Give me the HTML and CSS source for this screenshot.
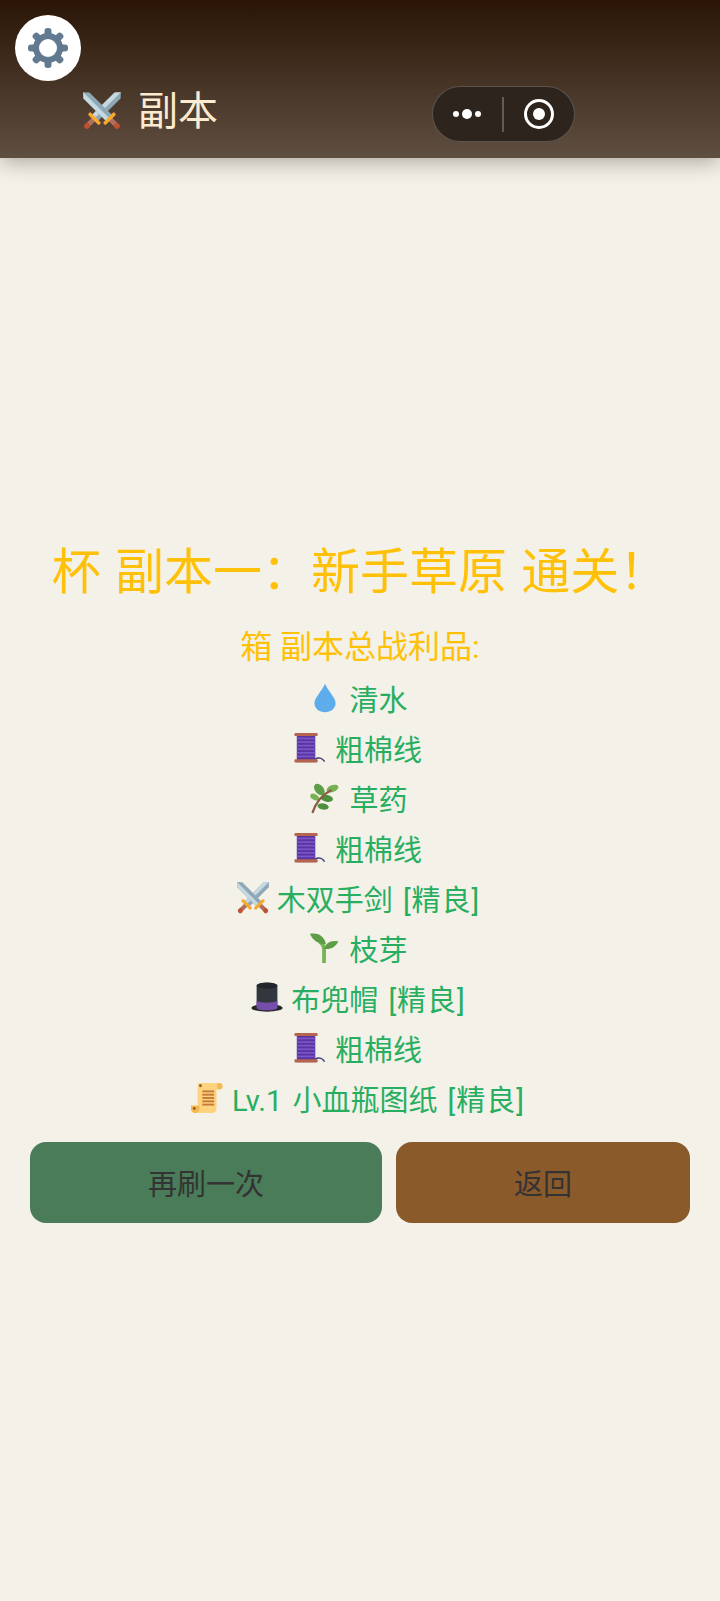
FILE: index.html
```html
<!DOCTYPE html>
<html lang="zh">

<head>
    <title>副本</title>
    <meta charset="UTF-8">
    <meta name="viewport" content="width=720, user-scalable=no">
    <link rel="stylesheet" href="styles.css">
</head>

<body>
    <svg class="sprites" aria-hidden="true">
        <symbol id="sword" viewBox="0 0 36 36" overflow="visible">
            <path fill="#8fa8b8" d="M18-6l3.800 4.200V27h-7.600V-1.800z"/>
            <path fill="#c6d8e0" d="M18-6v33h-3.800V-1.800z"/>
            <rect x="15.800" y="27" width="4.400" height="9" fill="#b0705f"/>
            <rect x="11" y="26" width="14" height="3.200" rx="1.400" fill="#f7a92e"/>
            <circle cx="18" cy="37" r="2.600" fill="#c1502e"/>
        </symbol>
        <symbol id="swords" viewBox="0 0 36 36">
            <use href="#sword" width="36" height="36" transform="rotate(45 18 18)"/>
            <use href="#sword" width="36" height="36" transform="rotate(-45 18 18)"/>
        </symbol>
        <symbol id="drop" viewBox="0 0 36 36">
            <path fill="#5dadec" d="M18 3c-1.500 4-5 8-7.500 12C8 18.500 6.800 21 6.800 23.500 6.800 29 11.800 33 18 33s11.200-4 11.200-9.500c0-2.500-1.200-5-3.700-8.500C23 11 19.500 7 18 3z"/>
        </symbol>
        <symbol id="spool" viewBox="0 0 36 36">
            <path fill="none" stroke="#3f3a6e" stroke-width="1.500" stroke-linecap="round" d="M22 30c4-2.500 8-1.500 10 2"/>
            <rect x="3" y="3" width="19.500" height="30" fill="#5a35a0"/>
            <g fill="#7c55c8">
                <rect x="3" y="7" width="19.500" height="1.800"/>
                <rect x="3" y="10.800" width="19.500" height="1.800"/>
                <rect x="3" y="14.600" width="19.500" height="1.800"/>
                <rect x="3" y="18.400" width="19.500" height="1.800"/>
                <rect x="3" y="22.200" width="19.500" height="1.800"/>
                <rect x="3" y="26" width="19.500" height="1.800"/>
            </g>
            <rect x=".5" y="2" width="24.500" height="3.400" rx="1" fill="#b5654d"/>
            <rect x=".5" y="30" width="24.500" height="3.400" rx="1" fill="#b5654d"/>
        </symbol>
        <symbol id="herb" viewBox="0 0 36 36">
            <ellipse cx="12" cy="9" rx="7" ry="4.500" fill="#5c9e45" transform="rotate(50 12 9)"/>
            <ellipse cx="26" cy="8" rx="6.500" ry="3.600" fill="#77b255" transform="rotate(-20 26 8)"/>
            <ellipse cx="20" cy="18.500" rx="6.500" ry="3.600" fill="#4d8f3a" transform="rotate(10 20 18.500)"/>
            <ellipse cx="16" cy="27" rx="6" ry="3.300" fill="#4d8f3a" transform="rotate(10 16 27)"/>
            <ellipse cx="7" cy="17" rx="5" ry="3" fill="#77b255" transform="rotate(30 7 17)"/>
            <path fill="none" stroke="#8a5a44" stroke-width="2.400" stroke-linecap="round" d="M5 33C8 24 14 15 24 10"/>
        </symbol>
        <symbol id="sprout" viewBox="0 0 36 36">
            <path fill="none" stroke="#77b255" stroke-width="4" d="M17 34V20C17 16 15 13 12 11"/>
            <path fill="#5c9e45" d="M2 3c7-1.500 15 1 17 11C11 14 5 10 2 3z"/>
            <path fill="#5c9e45" d="M32 11c-2 5-8 9-15 8 1-6 8-10 15-8z"/>
        </symbol>
        <symbol id="hat" viewBox="0 0 36 36">
            <ellipse cx="18" cy="28.500" rx="16.500" ry="4" fill="#23272b"/>
            <path fill="#31373d" d="M7 5c0-2 5-3.500 11-3.500S29 3 29 5v23c0 2-5 3-11 3S7 30 7 28z"/>
            <path fill="#744eaa" d="M7 21c3 1.500 6.500 2 11 2s8-.5 11-2v7c0 2-5 3-11 3S7 30 7 28z"/>
            <ellipse cx="18" cy="5" rx="11" ry="3.200" fill="#23272b"/>
        </symbol>
        <symbol id="scroll" viewBox="0 0 36 36">
            <path fill="#f5b94f" d="M27 2h3c2.500 0 3.500 1.500 3.500 3.500S32.500 9 30 9h-3z"/>
            <path fill="#fdd37f" d="M9 2h21c-2 0-3 1.500-3 3.500V30c0 2.500-2 4-4.500 4H3c2.500 0 4-1.500 4-4V4c0-1 1-2 2-2z"/>
            <path fill="#f5b94f" d="M0 26h9v4c0 2.500-2 4-4 4H4c-2 0-4-2-4-4z"/>
            <circle cx="10" cy="5" r="1.500" fill="#8a5a34"/>
            <circle cx="3.500" cy="29" r="1.500" fill="#8a5a34"/>
            <g fill="#c87a3a">
                <rect x="12" y="10" width="12.500" height="2"/>
                <rect x="12" y="13.500" width="12.500" height="2"/>
                <rect x="12" y="17" width="12.500" height="2"/>
                <rect x="12" y="20.500" width="12.500" height="2"/>
                <rect x="12" y="24" width="12.500" height="2"/>
            </g>
        </symbol>
    </svg>

    <header class="top-bar">
        <h1 class="page-title">
            <svg class="title-icon"><use href="#swords"/></svg>
            <span class="page-title-text">副本</span>
        </h1>
    </header>

    <button class="settings-btn" aria-label="设置">
        <svg class="gear" viewBox="0 0 40 40">
            <g fill="#627a90">
                <rect x="16.500" y="0" width="7" height="40" rx="3"/>
                <rect x="16.500" y="0" width="7" height="40" rx="3" transform="rotate(45 20 20)"/>
                <rect x="16.500" y="0" width="7" height="40" rx="3" transform="rotate(90 20 20)"/>
                <rect x="16.500" y="0" width="7" height="40" rx="3" transform="rotate(135 20 20)"/>
                <circle cx="20" cy="20" r="15"/>
            </g>
            <circle cx="20" cy="20" r="9" fill="#fff"/>
        </svg>
    </button>

    <div class="capsule">
        <div class="capsule-dots">
            <i class="dot"></i>
            <i class="dot dot-big"></i>
            <i class="dot"></i>
        </div>
        <i class="capsule-line"></i>
        <div class="capsule-target"><i></i></div>
    </div>

    <main class="result">
        <h2 class="result-title">杯 副本一：新手草原 通关！</h2>
        <h3 class="loot-title">箱 副本总战利品:</h3>
        <ul class="loot-list">
            <li><svg class="emoji"><use href="#drop"/></svg><span>清水</span></li>
            <li><svg class="emoji"><use href="#spool"/></svg><span>粗棉线</span></li>
            <li><svg class="emoji"><use href="#herb"/></svg><span>草药</span></li>
            <li><svg class="emoji"><use href="#spool"/></svg><span>粗棉线</span></li>
            <li><svg class="emoji"><use href="#swords"/></svg><span>木双手剑 <em class="grade">[精良]</em></span></li>
            <li><svg class="emoji"><use href="#sprout"/></svg><span>枝芽</span></li>
            <li><svg class="emoji"><use href="#hat"/></svg><span>布兜帽 <em class="grade">[精良]</em></span></li>
            <li><svg class="emoji"><use href="#spool"/></svg><span>粗棉线</span></li>
            <li><svg class="emoji"><use href="#scroll"/></svg><span>Lv.1 小血瓶图纸 <em class="grade">[精良]</em></span></li>
        </ul>
        <div class="actions">
            <button class="btn btn-again">再刷一次</button>
            <button class="btn btn-back">返回</button>
        </div>
    </main>
</body>

</html>
```

FILE: styles.css
```css
* {
    box-sizing: border-box;
}

html, body {
    height: 100%;
}

body {
    margin: 0;
    display: flex;
    flex-direction: column;
    background: #f4f1e8;
    font-family: Roboto, "Noto Sans CJK SC", sans-serif;
    overflow: hidden;
}

.sprites {
    display: none;
}

.top-bar {
    height: 158px;
    flex: none;
    padding: 91px 0 0 82px;
    background: linear-gradient(180deg, #2a1506, #5f4f41);
    box-shadow: 0 4px 20px rgba(40, 30, 20, .35);
}

.page-title {
    margin: 0;
    display: flex;
    align-items: center;
    gap: 16px;
    height: 40px;
    color: #fdebd0;
    font-size: 40px;
    font-weight: 400;
}

.page-title-text {
    padding-bottom: 6px;
}

.title-icon {
    width: 40px;
    height: 40px;
}

.settings-btn {
    position: absolute;
    left: 15px;
    top: 15px;
    width: 66px;
    height: 66px;
    padding: 0;
    display: flex;
    align-items: center;
    justify-content: center;
    background: #fff;
    border: 0;
    border-radius: 50%;
}

.gear {
    width: 40px;
    height: 40px;
}

.capsule {
    position: absolute;
    left: 432px;
    top: 86px;
    width: 143px;
    height: 56px;
    display: flex;
    align-items: center;
    background: #2e241e;
    border: 1.5px solid rgba(255, 255, 255, .22);
    border-radius: 28px;
}

.capsule-dots {
    width: 69px;
    padding-right: 1px;
    display: flex;
    align-items: center;
    justify-content: center;
    gap: 3px;
}

.dot {
    width: 6px;
    height: 6px;
    background: #fff;
    border-radius: 50%;
}

.dot-big {
    width: 10px;
    height: 10px;
}

.capsule-line {
    width: 1.5px;
    height: 35px;
    background: rgba(255, 255, 255, .25);
}

.capsule-target {
    width: 30px;
    height: 30px;
    margin-left: 20px;
    display: flex;
    align-items: center;
    justify-content: center;
    border: 3px solid #fff;
    border-radius: 50%;
}

.capsule-target i {
    width: 12px;
    height: 12px;
    background: #fff;
    border-radius: 50%;
}

.result {
    flex: 1;
    padding: 0 30px;
    display: flex;
    flex-direction: column;
    justify-content: center;
    text-align: center;
}

.result-title {
    margin: 0;
    padding-top: 3px;
    color: #ffc107;
    font-size: 49px;
    font-weight: 400;
    line-height: 68px;
    word-spacing: 2px;
    white-space: nowrap;
}

.loot-title {
    margin: 18px 0 4px;
    color: #ffc107;
    font-size: 32px;
    font-weight: 400;
    line-height: 44px;
}

.loot-list {
    margin: 0;
    padding: 0;
    list-style: none;
    color: #27ae60;
    font-size: 29px;
    word-spacing: 3px;
}

.loot-list li {
    height: 49.9px;
    padding-right: 4px;
    display: flex;
    align-items: center;
    justify-content: center;
    gap: 7px;
}

.grade {
    font-style: normal;
    letter-spacing: 1px;
}

.emoji {
    width: 34px;
    height: 34px;
}

.actions {
    margin-top: 19px;
    display: flex;
    gap: 14px;
}

.btn {
    height: 81px;
    padding: 0;
    color: #333;
    font-family: inherit;
    font-size: 29px;
    border: 0;
    border-radius: 16px;
}

.btn-again {
    flex: 352;
    background: #4a7c59;
}

.btn-back {
    flex: 294;
    background: #8b5a2b;
}
```
